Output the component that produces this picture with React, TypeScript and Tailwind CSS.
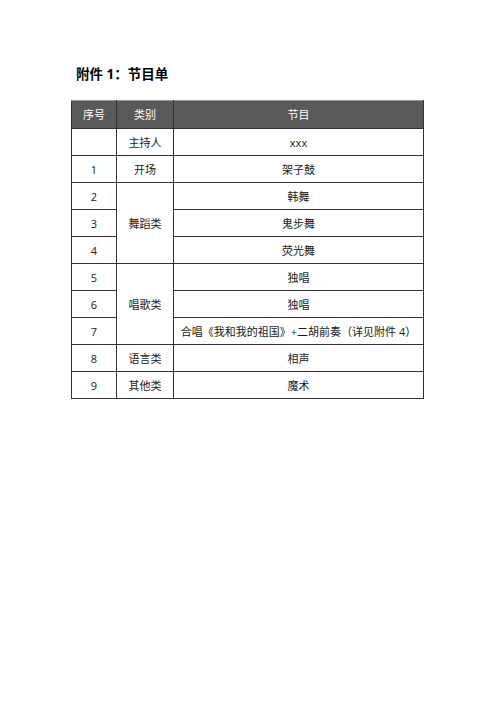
import React from 'react';

const font = { fontFamily: '"Open Sans","Noto Sans CJK SC",sans-serif' };

type Row = { no: string; cat?: string; span?: number; item: string };

const rows: Row[] = [
  { no: '', cat: '主持人', item: 'xxx' },
  { no: '1', cat: '开场', item: '架子鼓' },
  { no: '2', cat: '舞蹈类', span: 3, item: '韩舞' },
  { no: '3', item: '鬼步舞' },
  { no: '4', item: '荧光舞' },
  { no: '5', cat: '唱歌类', span: 3, item: '独唱' },
  { no: '6', item: '独唱' },
  { no: '7', item: '合唱《我和我的祖国》+二胡前奏（详见附件 4）' },
  { no: '8', cat: '语言类', item: '相声' },
  { no: '9', cat: '其他类', item: '魔术' },
];

export default function App() {
  return (
    <div className="w-[500px] h-[707px] bg-white text-[#1a1a1a]" style={font}>
      <div className="pt-[66px] pl-[76px]">
        <h1 className="text-[13.5px] font-bold leading-[16px] text-black">附件 1：节目单</h1>
      </div>
      <div className="pl-[71px] pt-[18px]">
        <table className="border-collapse w-[353px] table-fixed text-[11px] leading-none">
          <colgroup>
            <col className="w-[45px]" />
            <col className="w-[57px]" />
            <col />
          </colgroup>
          <thead>
            <tr className="h-[28px] bg-[#595959] text-white">
              <th className="border border-[#333] border-t-[#999] font-normal">序号</th>
              <th className="border border-[#333] border-t-[#999] font-normal">类别</th>
              <th className="border border-[#333] border-t-[#999] font-normal">节目</th>
            </tr>
          </thead>
          <tbody>
            {rows.map((r, i) => (
              <tr key={i} className="h-[27px]">
                <td className="border border-[#333] text-center">{r.no}</td>
                {r.cat && (
                  <td className="border border-[#333] text-center" rowSpan={r.span || 1}>
                    {r.cat}
                  </td>
                )}
                <td className="border border-[#333] text-center">{r.item}</td>
              </tr>
            ))}
          </tbody>
        </table>
      </div>
    </div>
  );
}
